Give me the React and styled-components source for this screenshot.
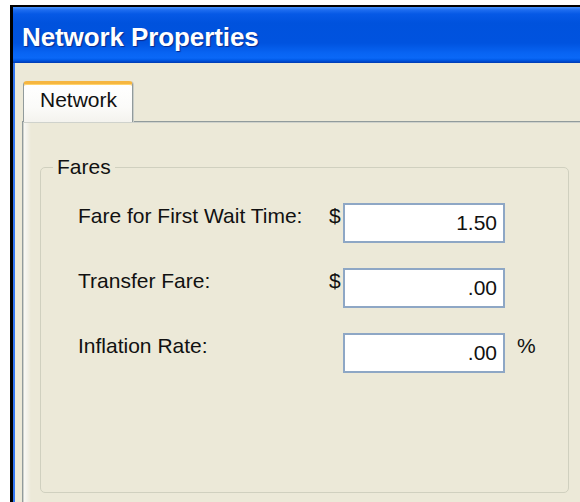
import React from 'react';
import styled, { createGlobalStyle } from 'styled-components';

const GlobalStyle = createGlobalStyle`
  html, body {
    margin: 0;
    padding: 0;
    background: #ffffff;
    overflow: hidden;
  }
  body {
    width: 580px;
    height: 502px;
    font-family: 'Liberation Sans', Arial, sans-serif;
  }
`;

// Dialog window frame, clipped at the right edge of the page
const Window = styled.div`
  margin: 5px 0 0 10px;
  width: 570px;
  height: 497px;
  box-sizing: border-box;
  overflow: hidden;
  border-top: 2px solid #000;
  border-left: 3px solid #000;
`;

const TitleBar = styled.div`
  width: 620px;
  height: 56px;
  display: flex;
  align-items: center;
  padding: 4px 0 0 9px;
  box-sizing: border-box;
  background: linear-gradient(
    to bottom,
    #4a95fb 0px,
    #1d6cf0 3px,
    #0659e6 7px,
    #0052dd 16px,
    #0053df 36px,
    #0864f3 46px,
    #0a68f7 51px,
    #005ae8 53px,
    #0043c4 55px,
    #003bb0 56px
  );
`;

const Title = styled.h1`
  margin: 0;
  font-size: 26px;
  font-weight: bold;
  color: #ffffff;
  letter-spacing: -0.1px;
  text-shadow: 1px 1px 1px #0a2a8c;
`;

const Body = styled.div`
  width: 620px;
  background: #ece9d8;
  border-left: 2px solid #3377f2;
  padding: 18px 0 0 7px;
`;

const TabStrip = styled.div`
  display: flex;
  padding-left: 1px;
`;

const Tab = styled.div`
  position: relative;
  z-index: 1;
  height: 41px;
  box-sizing: border-box;
  margin-bottom: -1px;
  padding: 4px 15px 0 16px;
  border-top: 3px solid #f6b640;
  border-left: 1px solid #919b9c;
  border-right: 1px solid #919b9c;
  border-radius: 4px 4px 0 0;
  box-shadow: inset 0 1px 0 #ffd36b, 1px 0 0 #c9cdc8;
  background: linear-gradient(to bottom, #ffffff 0%, #fbfbf9 60%, #f4f3ee 100%);
  font-size: 21px;
  line-height: 24px;
  color: #111;
`;

const Panel = styled.div`
  border: 1px solid #919b9c;
  border-right: none;
  border-bottom: none;
  padding: 33px 0 24px 17px;
  background: linear-gradient(to right, #fbfbf8 0px, #f3f2ea 4px, #ece9d8 8px);
  box-shadow: inset 1px 1px 0 #cfd2cc;
`;

const Group = styled.fieldset`
  margin: 0;
  width: 529px;
  height: 338px;
  box-sizing: border-box;
  padding: 24px 0 0 0;
  border: 1px solid #d0d0bf;
  border-radius: 5px;
`;

const Legend = styled.legend`
  margin-left: 12px;
  padding: 0 4px;
  font-size: 21px;
  line-height: 24px;
  color: #111;
`;

const Rows = styled.div`
  display: grid;
  grid-template-columns: 251px 14px 162px auto;
  row-gap: 25px;
  align-items: start;
  padding-left: 37px;
`;

const Label = styled.span`
  margin-top: 1px;
  font-size: 21px;
  line-height: 24px;
  color: #111;
  white-space: nowrap;
`;

const Unit = styled.span`
  margin: 1px 0 0 ${(p) => (p.$after ? '12px' : '0')};
  font-size: 21px;
  line-height: 24px;
  color: #111;
`;

const Field = styled.input`
  width: 162px;
  height: 40px;
  box-sizing: border-box;
  margin: 0;
  padding: 0 6px 0 4px;
  border: 2px solid #8ea7c5;
  background: #fff;
  text-align: right;
  font-family: 'Liberation Sans', Arial, sans-serif;
  font-size: 21px;
  color: #111;
  outline: none;
`;

const fares = [
  { label: 'Fare for First Wait Time:', value: '1.50', prefix: '$' },
  { label: 'Transfer Fare:', value: '.00', prefix: '$' },
  { label: 'Inflation Rate:', value: '.00', suffix: '%' },
];

export default function App() {
  return (
    <>
      <GlobalStyle />
      <Window>
        <TitleBar>
          <Title>Network Properties</Title>
        </TitleBar>
        <Body>
          <TabStrip>
            <Tab>Network</Tab>
          </TabStrip>
          <Panel>
            <Group>
              <Legend>Fares</Legend>
              <Rows>
                {fares.map((f) => (
                  <React.Fragment key={f.label}>
                    <Label>{f.label}</Label>
                    <Unit>{f.prefix || ''}</Unit>
                    <Field defaultValue={f.value} readOnly />
                    <Unit $after>{f.suffix || ''}</Unit>
                  </React.Fragment>
                ))}
              </Rows>
            </Group>
          </Panel>
        </Body>
      </Window>
    </>
  );
}
